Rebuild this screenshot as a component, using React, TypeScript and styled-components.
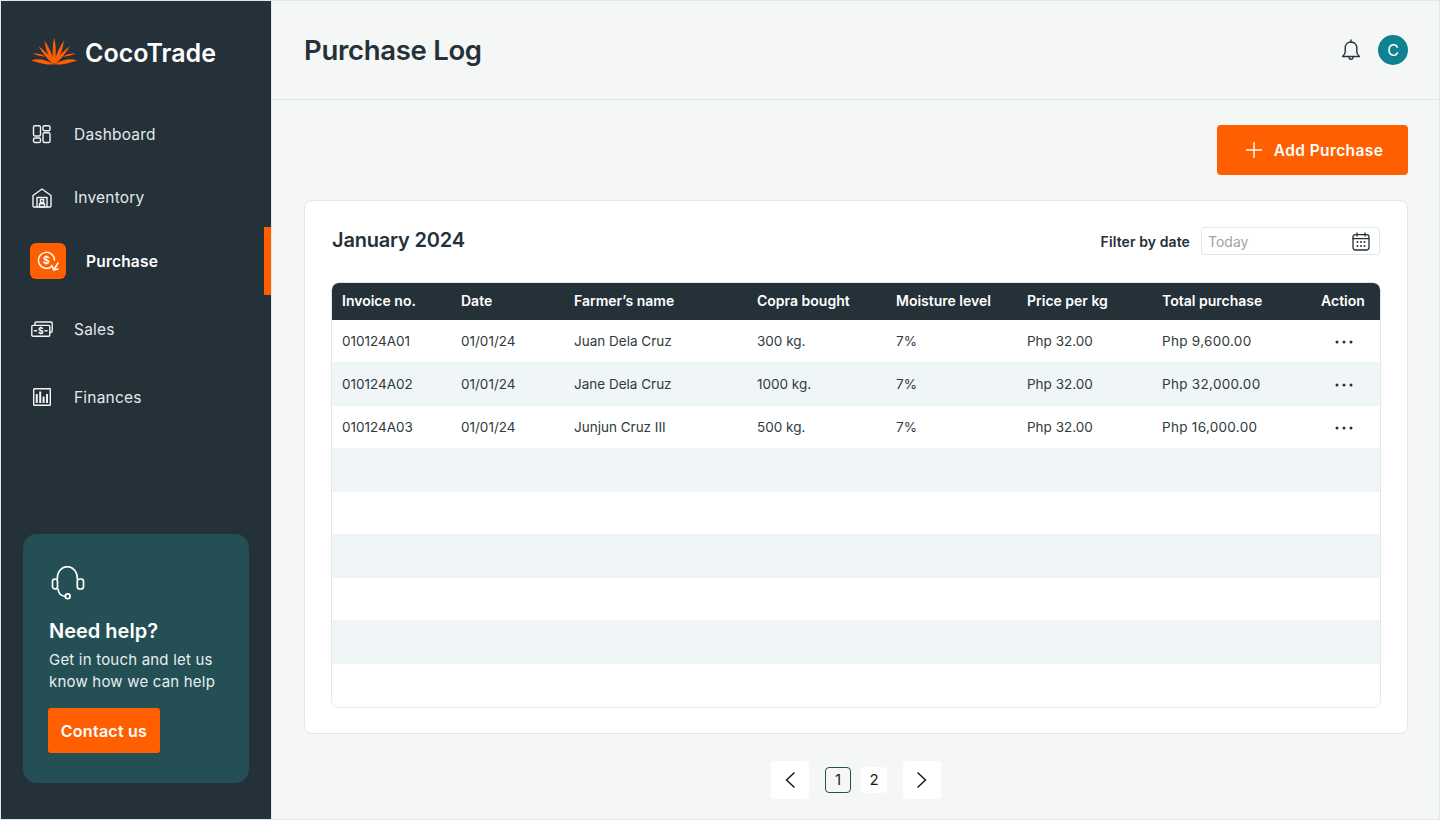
import React from "react";
import styled, { createGlobalStyle } from "styled-components";

const FONT = `"Inter", "Liberation Sans", sans-serif`;
const ORANGE = "#ff5f00";
const DARK = "#253139";

const Global = createGlobalStyle`
  html, body { margin: 0; padding: 0; }
  body { font-family: ${FONT}; background: #dfe8ec; }
  * { box-sizing: border-box; }
`;

const Page = styled.div`
  width: 1440px;
  height: 820px;
  padding: 1px;
  display: flex;
  background: #dfe8ec;
  overflow: hidden;
`;

const Sidebar = styled.aside`
  width: 270px;
  flex: none;
  background: ${DARK};
  display: flex;
  flex-direction: column;
`;

const Brand = styled.div`
  height: 99px;
  padding: 36px 0 0 30px;
  display: flex;
  align-items: flex-start;
  gap: 7px;
`;

const BrandName = styled.span`
  color: #fff;
  font-size: 25px;
  font-weight: 600;
  line-height: 32px;
`;

const Nav = styled.nav`
  display: grid;
  grid-template-rows: 68px 59px 68px 68px 68px;
`;

const NavItem = styled.a<{ $active?: boolean }>`
  display: flex;
  align-items: center;
  position: relative;
  padding-left: ${(p) => (p.$active ? 29 : 30)}px;
  gap: ${(p) => (p.$active ? 20 : 21)}px;
  color: ${(p) => (p.$active ? "#fff" : "#e4e8ea")};
  font-size: 15.5px;
  font-weight: ${(p) => (p.$active ? 600 : 400)};
  letter-spacing: 0.2px;
  ${(p) =>
    p.$active &&
    `&::after { content: ""; position: absolute; right: 0; top: 0; bottom: 0; width: 7px; background: ${ORANGE}; }`}
`;

const IconSlot = styled.span`
  width: 22px;
  height: 24px;
  flex: none;
  display: flex;
  align-items: center;
  justify-content: center;
`;

const ActiveIcon = styled.span`
  width: 36px;
  height: 36px;
  flex: none;
  border-radius: 6px;
  background: ${ORANGE};
  display: flex;
  align-items: center;
  justify-content: center;
`;

const Help = styled.section`
  margin: auto 22px 36px 22px;
  height: 249px;
  border-radius: 14px;
  background: #245055;
  padding: 32px 25px 0;
  color: #fff;
`;

const HelpIcon = styled.div`
  height: 40px;
  padding-left: 3px;
  margin-bottom: 12px;
`;

const HelpTitle = styled.h3`
  margin: 0;
  padding-left: 1px;
  font-size: 20px;
  line-height: 26px;
  font-weight: 600;
`;

const HelpText = styled.p`
  margin: 5px 0 15px;
  padding-left: 1px;
  font-size: 15px;
  line-height: 22px;
  color: #e6eeee;
  letter-spacing: 0.2px;
`;

const ContactButton = styled.button`
  width: 112px;
  height: 45px;
  border: 0;
  border-radius: 3px;
  background: ${ORANGE};
  color: #fff;
  font: 600 16px ${FONT};
  letter-spacing: 0.25px;
  padding: 0;
`;

const Main = styled.main`
  flex: 1;
  margin-left: 1px;
  min-width: 0;
  background: #f5f7f7;
  display: flex;
  flex-direction: column;
`;

const Header = styled.header`
  height: 99px;
  flex: none;
  border-bottom: 1px solid #dfe5e8;
  padding: 0 31px 0 32px;
  display: flex;
  align-items: center;
  justify-content: space-between;
`;

const Title = styled.h1`
  margin: 0;
  font-size: 27.5px;
  font-weight: 600;
  color: ${DARK};
  letter-spacing: -0.3px;
`;

const HeaderActions = styled.div`
  display: flex;
  align-items: center;
  gap: 17px;
`;

const Avatar = styled.div`
  width: 30px;
  height: 30px;
  border-radius: 50%;
  background: #0f8190;
  color: #fff;
  font-size: 16px;
  display: flex;
  align-items: center;
  justify-content: center;
`;

const Content = styled.div`
  flex: 1;
  padding: 25px 31px 0 32px;
  display: flex;
  flex-direction: column;
`;

const Toolbar = styled.div`
  display: flex;
  justify-content: flex-end;
  margin-bottom: 25px;
`;

const AddButton = styled.button`
  width: 191px;
  height: 50px;
  border: 0;
  border-radius: 4px;
  background: ${ORANGE};
  color: #fff;
  font: 600 15.5px ${FONT};
  letter-spacing: 0.4px;
  display: flex;
  align-items: center;
  justify-content: center;
  gap: 12px;
  padding: 0 0 0 4px;
`;

const Card = styled.section`
  height: 534px;
  background: #fff;
  border: 1px solid #dfe7ea;
  border-radius: 8px;
  padding: 26px 27px 0 26px;
`;

const CardHeader = styled.div`
  height: 28px;
  margin-bottom: 27px;
  padding-left: 1px;
  display: flex;
  align-items: center;
  justify-content: space-between;
`;

const CardTitle = styled.h2`
  margin: 0 0 2px;
  font-size: 20px;
  font-weight: 600;
  color: ${DARK};
  letter-spacing: -0.2px;
`;

const Filter = styled.div`
  display: flex;
  align-items: center;
  gap: 11px;
`;

const FilterLabel = styled.span`
  font-size: 14px;
  font-weight: 600;
  color: ${DARK};
  letter-spacing: 0.1px;
`;

const DateField = styled.div`
  width: 179px;
  height: 28px;
  border: 1px solid #dfe7ea;
  border-radius: 3px;
  padding: 0 9px 0 6px;
  display: flex;
  align-items: center;
  justify-content: space-between;
  font-size: 14px;
  color: #a3a3a3;
`;

const Table = styled.div`
  height: 426px;
  border: 1px solid #dfe7ea;
  border-radius: 8px;
  overflow: hidden;
  width: 1050px;
`;

const Row = styled.div<{ $alt?: boolean }>`
  display: grid;
  grid-template-columns: 119px 113px 183px 139px 131px 135px 159px 1fr;
  height: 43px;
  align-items: center;
  background: ${(p) => (p.$alt ? "#f0f5f7" : "#fff")};
  border-bottom: 1px solid #f0f3f5;
  font-size: 13.5px;
  color: #2f3a40;
  &:last-child { border-bottom: 0; }
`;

const HeadRow = styled(Row)`
  height: 37px;
  background: ${DARK};
  border-bottom: 0;
  color: #fff;
  font-weight: 600;
  font-size: 14px;
  padding-bottom: 2px;
  letter-spacing: 0;
`;

const Cell = styled.div<{ $wide?: boolean }>`
  padding-left: 10px;
  letter-spacing: ${(p) => (p.$wide ? "0.3px" : "0")};
`;

const ActionCell = styled(Cell)`
  padding: 2px 0 0 24px;
  display: flex;
`;

const Pager = styled.nav`
  height: 85px;
  padding-top: 6px;
  display: flex;
  align-items: center;
  justify-content: center;
  gap: 10px;
`;

const PageArrow = styled.button`
  width: 38px;
  height: 38px;
  border: 0;
  border-radius: 3px;
  background: #fff;
  padding: 0;
  display: flex;
  align-items: center;
  justify-content: center;
  margin: 0 6px;
`;

const PageNumber = styled.button<{ $current?: boolean }>`
  width: 26px;
  height: 26px;
  border: 1px solid ${(p) => (p.$current ? "#245055" : "#fff")};
  border-radius: 4px;
  background: ${(p) => (p.$current ? "transparent" : "#fff")};
  color: #1c1c1c;
  font: 400 15px ${FONT};
  padding: 0;
`;

const Line = { fill: "none", stroke: "#f2f4f5", strokeWidth: 1.4, strokeLinecap: "round", strokeLinejoin: "round" } as const;

const Leaves = () => (
  <>
    <path d="M13.5 3.5 C14 10 17 18.5 21.6 26.4 L23.4 25 C21 17 18 10 13.5 3.5 Z" />
    <path d="M7.5 9 C11.5 16 16.5 22.5 22.2 27 L23.4 24.8 C18.5 19.5 13.5 13.5 7.5 9 Z" />
    <path d="M0 23.4 C8 20.8 16 23 23.2 27.6 C15 27.8 7 25.8 0 23.4 Z" />
    <path d="M2 16.8 C6 16.2 10.4 17 14.4 19.8 C10 19.4 6 18.2 2 16.8 Z" />
  </>
);

const Logo = () => (
  <svg width="47" height="28" viewBox="0 0 47 28">
    <g fill={ORANGE}>
      <path d="M23.2 0.6 C21.6 8 21.2 15 22.2 26.5 H24.2 C25.2 15 24.8 8 23.2 0.6 Z" />
      <Leaves />
      <g transform="translate(46.4 0) scale(-1 1)">
        <Leaves />
      </g>
    </g>
  </svg>
);

const DashboardIcon = () => (
  <svg width="20" height="20" viewBox="0 0 20 20" {...Line}>
    <rect x="1.5" y="1.7" width="7" height="10.3" rx="1.5" />
    <rect x="11" y="1.7" width="7" height="5" rx="1.5" />
    <rect x="1.5" y="14" width="7" height="4.5" rx="1.5" />
    <rect x="11" y="8.7" width="7" height="9.8" rx="1.5" />
  </svg>
);

const InventoryIcon = () => (
  <svg width="20" height="20" viewBox="0 0 20 20" {...Line}>
    <path d="M1 7.5 L10 1 L19 7.5 V18 a1 1 0 0 1 -1 1 H2 a1 1 0 0 1 -1 -1 Z" />
    <path d="M5 19 V9.5 H15 V19" />
    <path d="M8.4 11.5 H11.6 V14.4 H8.4 Z M7.5 15.8 H12.5 V19 H7.5 Z" />
  </svg>
);

const PurchaseIcon = () => (
  <svg width="24" height="24" viewBox="0 0 24 24" {...Line} stroke="#fff" strokeWidth={1.5}>
    <path d="M15.5 17.6 A8 8 0 1 1 18.5 11" />
    <text x="10.5" y="15" fontSize="11" fontFamily={FONT} fontWeight="600" textAnchor="middle" fill="#fff" stroke="none">$</text>
    <path d="M22 14 L18 20.5 M16 16.5 L17.6 21 L22 20" />
  </svg>
);

const SalesIcon = () => (
  <svg width="22" height="16" viewBox="0 0 22 16" {...Line}>
    <rect x="0.8" y="4.4" width="18" height="10.8" rx="1.2" />
    <path d="M4 4 V2.2 a1.2 1.2 0 0 1 1.2 -1.2 H20 a1.2 1.2 0 0 1 1.2 1.2 V10 a1.2 1.2 0 0 1 -1.2 1.2 H18.8" />
    <path d="M3.5 9.8 H5.5 M14 9.8 H16" strokeWidth={1.6} />
    <text x="9.8" y="12.8" fontSize="8.5" fontFamily={FONT} fontWeight="700" textAnchor="middle" fill="#fff" stroke="none">$</text>
  </svg>
);

const FinancesIcon = () => (
  <svg width="18" height="18" viewBox="0 0 18 18" {...Line} strokeLinecap="butt">
    <rect x="0.7" y="0.7" width="16.6" height="16.6" rx="0.6" />
    <path d="M3.8 15 V6 M7.2 15 V3.5 M10.6 15 V8.5 M14 15 V6" strokeWidth={2} />
  </svg>
);

const HeadsetIcon = () => (
  <svg width="34" height="34" viewBox="0 0 34 34" {...Line} stroke="#fff" strokeWidth={1.7}>
    <path d="M6.3 13 C6.3 -3.4 26.3 -3.4 26.3 13" />
    <rect x="1.5" y="13" width="5" height="10" rx="2.5" />
    <rect x="26.3" y="13" width="6.2" height="10" rx="2.5" />
    <path d="M7 23 C7.5 27 10 30 14.2 30.3" />
    <circle cx="16.7" cy="30.3" r="2.4" />
  </svg>
);

const BellIcon = () => (
  <svg width="20" height="22" viewBox="0 0 20 22" fill="none" stroke={DARK} strokeWidth="1.4" strokeLinecap="round" strokeLinejoin="round">
    <path d="M10 3 C6 3 4.2 6 4.2 9 V13 C4.2 15 3 16 1.5 17.5 H18.5 C17 16 15.8 15 15.8 13 V9 C15.8 6 14 3 10 3 Z" />
    <path d="M10 1 V3 M8 18 C8 21 12 21 12 18" />
  </svg>
);

const PlusIcon = () => (
  <svg width="16" height="16" viewBox="0 0 16 16" stroke="#fff" strokeWidth="1.4" strokeLinecap="round">
    <path d="M8 0.5 V15.5 M0.5 8 H15.5" />
  </svg>
);

const CalendarIcon = () => (
  <svg width="18" height="19" viewBox="0 0 18 19" fill="none" stroke={DARK} strokeWidth="1.3" strokeLinecap="round">
    <rect x="1" y="2.6" width="16" height="15.4" rx="2.4" />
    <path d="M1 6.6 H17 M5 1 V4 M13 1 V4" />
    <g fill={DARK} stroke="none">
      <circle cx="5.5" cy="10" r="1" /><circle cx="9" cy="10" r="1" /><circle cx="12.5" cy="10" r="1" />
      <circle cx="5.5" cy="14" r="1" /><circle cx="9" cy="14" r="1" /><circle cx="12.5" cy="14" r="1" />
    </g>
  </svg>
);

const DotsIcon = () => (
  <svg width="18" height="4" viewBox="0 0 18 4" fill="#253139">
    <circle cx="2" cy="2" r="1.5" /><circle cx="9" cy="2" r="1.5" /><circle cx="16" cy="2" r="1.5" />
  </svg>
);

const ChevronIcon = ({ left }: { left?: boolean }) => (
  <svg width="10" height="16" viewBox="0 0 10 16" fill="none" stroke="#1c1c1c" strokeWidth="1.6" strokeLinecap="round" strokeLinejoin="round">
    <path d={left ? "M9 1 L1.5 8 L9 15" : "M1 1 L8.5 8 L1 15"} />
  </svg>
);

const columns = ["Invoice no.", "Date", "Farmer\u2019s name", "Copra bought", "Moisture level", "Price per kg", "Total purchase", "Action"];

const rows = [
  ["010124A01", "01/01/24", "Juan Dela Cruz", "300 kg.", "7%", "Php 32.00", "Php 9,600.00"],
  ["010124A02", "01/01/24", "Jane Dela Cruz", "1000 kg.", "7%", "Php 32.00", "Php 32,000.00"],
  ["010124A03", "01/01/24", "Junjun Cruz III", "500 kg.", "7%", "Php 32.00", "Php 16,000.00"],
];

const emptyRows = [3, 4, 5, 6, 7, 8];

export default function App() {
  return (
    <Page>
      <Global />
      <Sidebar>
        <Brand>
          <Logo />
          <BrandName>CocoTrade</BrandName>
        </Brand>
        <Nav>
          <NavItem><IconSlot><DashboardIcon /></IconSlot>Dashboard</NavItem>
          <NavItem><IconSlot><InventoryIcon /></IconSlot>Inventory</NavItem>
          <NavItem $active><ActiveIcon><PurchaseIcon /></ActiveIcon>Purchase</NavItem>
          <NavItem><IconSlot><SalesIcon /></IconSlot>Sales</NavItem>
          <NavItem><IconSlot><FinancesIcon /></IconSlot>Finances</NavItem>
        </Nav>
        <Help>
          <HelpIcon><HeadsetIcon /></HelpIcon>
          <HelpTitle>Need help?</HelpTitle>
          <HelpText>Get in touch and let us know how we can help</HelpText>
          <ContactButton>Contact us</ContactButton>
        </Help>
      </Sidebar>
      <Main>
        <Header>
          <Title>Purchase Log</Title>
          <HeaderActions>
            <BellIcon />
            <Avatar>C</Avatar>
          </HeaderActions>
        </Header>
        <Content>
          <Toolbar>
            <AddButton><PlusIcon />Add Purchase</AddButton>
          </Toolbar>
          <Card>
            <CardHeader>
              <CardTitle>January 2024</CardTitle>
              <Filter>
                <FilterLabel>Filter by date</FilterLabel>
                <DateField>Today<CalendarIcon /></DateField>
              </Filter>
            </CardHeader>
            <Table>
              <HeadRow>
                {columns.map((c) => <Cell key={c}>{c}</Cell>)}
              </HeadRow>
              {rows.map((r, i) => (
                <Row key={r[0]} $alt={i % 2 === 1}>
                  {r.map((v, j) => <Cell key={j} $wide={j === 6}>{v}</Cell>)}
                  <ActionCell><DotsIcon /></ActionCell>
                </Row>
              ))}
              {emptyRows.map((n) => <Row key={n} $alt={n % 2 === 1} />)}
            </Table>
          </Card>
          <Pager>
            <PageArrow><ChevronIcon left /></PageArrow>
            <PageNumber $current>1</PageNumber>
            <PageNumber>2</PageNumber>
            <PageArrow><ChevronIcon /></PageArrow>
          </Pager>
        </Content>
      </Main>
    </Page>
  );
}
